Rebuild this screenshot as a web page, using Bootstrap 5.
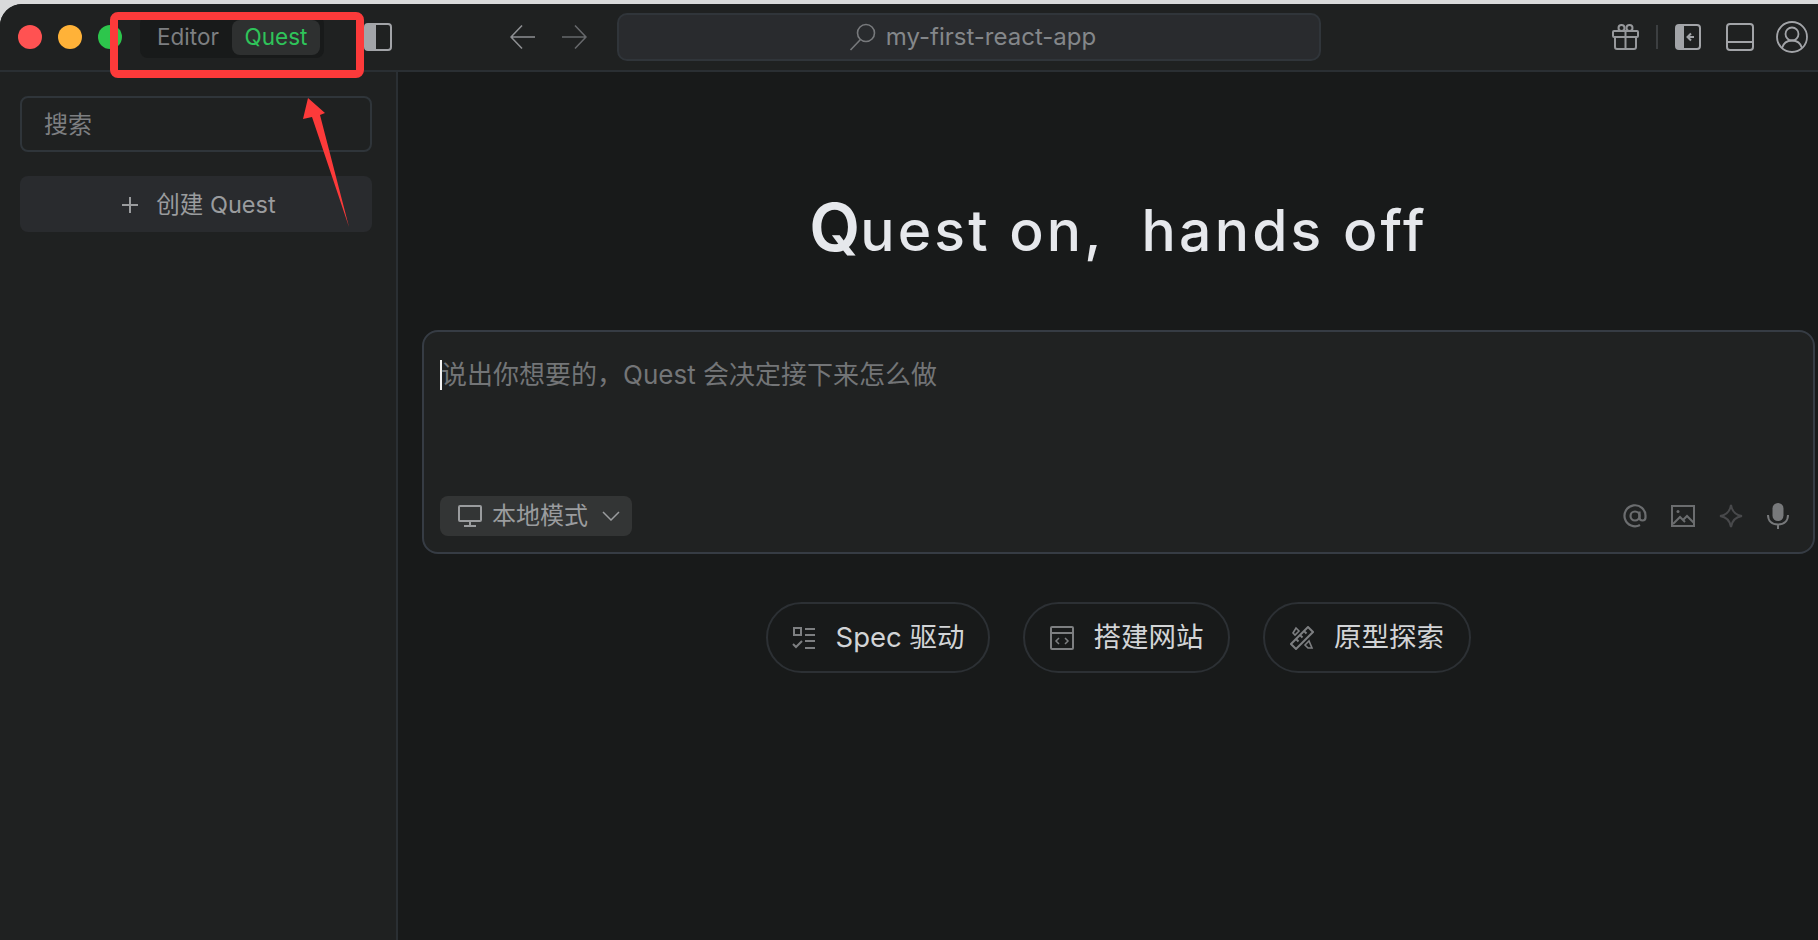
<!DOCTYPE html>
<html lang="zh-CN">
<head>
  <meta charset="UTF-8" />
  <title>my-first-react-app</title>
  <link href="https://cdn.jsdelivr.net/npm/bootstrap@5.3.3/dist/css/bootstrap.min.css" rel="stylesheet" />
  <style>
    html, body { height: 100%; }
    body {
      margin: 0;
      overflow: hidden;
      background: #d9dadb;
      font-family: Inter, "Noto Sans CJK SC", sans-serif;
      padding-top: 4px;
    }
    .app-window {
      height: 936px;
      background: #181a1a;
      border-top-left-radius: 22px;
      overflow: hidden;
      display: flex;
      flex-direction: column;
    }
    .title-bar {
      height: 68px;
      flex: none;
      background: #1f2121;
      border-bottom: 2px solid #2a2f33;
      padding-left: 18px;
    }
    .traffic-dot { width: 24px; height: 24px; border-radius: 50%; flex: none; margin-right: 16px; }
    .mode-switch {
      width: 184px;
      height: 42px;
      margin-left: 2px;
      background: #181a1a;
      border-radius: 8px;
      padding: 3px 4px 3px 17px;
      font-size: 22.500px;
      color: #7d7f81;
    }
    .mode-active {
      width: 88px;
      height: 35px;
      background: #2e3030;
      border-radius: 8px;
      color: #2fc45a;
    }
    .panel-toggle { margin-left: 40px; }
    .nav-back { margin-left: 118px; }
    .nav-forward { margin-left: 25px; }
    .address-bar {
      width: 704px;
      height: 48px;
      margin-left: 30px;
      padding-left: 7px;
      background: #292b2e;
      border: 2px solid #30353a;
      border-radius: 10px;
      color: #84878a;
      font-size: 24px;
      gap: 10px;
    }
    .bar-divider { width: 2px; height: 24px; background: #3c3f41; margin: 0 17px; }
    .panel-bottom { margin-left: 25px; }
    .user-avatar { margin: 0 10px 0 22px; }
    .side-col {
      width: 398px;
      flex: none;
      background: #1f2121;
      border-right: 2px solid #2a2f33;
      padding: 24px 24px 0 20px;
    }
    .side-search {
      height: 56px;
      border: 2px solid #2f353a;
      border-radius: 8px;
      padding: 2px 0 0 22px;
      color: #7d7f81;
      font-size: 24px;
    }
    .side-create {
      height: 56px;
      margin-top: 24px;
      padding: 2px 0 0 6px;
      background: #292b2e;
      border-radius: 8px;
      color: #9a9c9e;
      font-size: 23.500px;
      gap: 18px;
    }
    .main-col { padding: 0 3px 0 24px; min-width: 0; }
    .hero-title {
      margin: 122px 0 0;
      height: 74px;
      color: #e6e8ec;
      font-family: Inter, sans-serif;
      font-size: 57px;
      font-weight: 500;
      letter-spacing: 3.200px;
      line-height: 74px;
      text-align: center;
    }
    .hero-title b { font-size: 66px; font-weight: 600; line-height: 1; letter-spacing: 0; }
    .prompt-box {
      height: 224px;
      margin-top: 62px;
      background: #202222;
      border: 2px solid #363c44;
      border-radius: 16px;
      padding: 26px 16px 16px 16px;
    }
    .prompt-text { color: #737577; font-size: 26px; line-height: 34px; }
    .prompt-caret { display: inline-block; width: 2px; height: 30px; background: #f2f2f2; vertical-align: -6px; margin-right: -1px; }
    .local-mode {
      width: 192px;
      height: 40px;
      background: #333535;
      border-radius: 8px;
      color: #9a9c9e;
      font-size: 24px;
      padding-left: 18px;
      gap: 10px;
    }
    .prompt-tools { gap: 24px; margin-right: 8px; }
    .pill-row { margin-top: 48px; gap: 33px; }
    .pill-link {
      height: 71px;
      border: 2px solid #2c3034;
      border-radius: 36px;
      color: #d2d4d6;
      font-size: 27.500px;
      gap: 20px;
    }
    .pill-spec { width: 224px; }
    .pill-site { width: 207px; }
    .pill-proto { width: 208px; }
    .note-layer { position: absolute; left: 0; top: 0; pointer-events: none; }
    svg { display: block; flex: none; }
  </style>
</head>
<body>
  <div class="app-window">
    <!-- Title bar -->
    <div class="title-bar d-flex align-items-center">
      <span class="traffic-dot" style="background:#ff5252"></span>
      <span class="traffic-dot" style="background:#ffb238"></span>
      <span class="traffic-dot" style="background:#2dc64c"></span>
      <div class="mode-switch d-flex align-items-center justify-content-between">
        <span>Editor</span>
        <span class="mode-active d-flex align-items-center justify-content-center">Quest</span>
      </div>
      <svg class="panel-toggle" width="28" height="28" viewBox="0 0 28 28" fill="none">
        <rect x="1" y="1" width="26" height="26" rx="3" stroke="#a2a4a8" stroke-width="2"/>
        <path d="M3 1h9v26H3a2 2 0 0 1-2-2V3a2 2 0 0 1 2-2z" fill="#a2a4a8"/>
      </svg>
      <svg class="nav-back" width="26" height="26" viewBox="0 0 26 26" fill="none" stroke="#8d8f92" stroke-width="1.600">
        <path d="M25 13H1M12 1.500 1 13l11 11.500"/>
      </svg>
      <svg class="nav-forward" width="26" height="26" viewBox="0 0 26 26" fill="none" stroke="#66686b" stroke-width="1.600">
        <path d="M1 13h24M14 1.500 25 13 14 24.500"/>
      </svg>
      <div class="address-bar d-flex align-items-center justify-content-center">
        <svg width="27" height="28" viewBox="0 0 27 28" fill="none" stroke="#77797c" stroke-width="1.600">
          <circle cx="17" cy="10" r="8.500"/>
          <path d="M11.500 16.500 1.500 27"/>
        </svg>
        <span>my-first-react-app</span>
      </div>
      <div class="d-flex align-items-center ms-auto">
        <svg width="27" height="26" viewBox="0 0 27 26" fill="none" stroke="#96989b" stroke-width="2">
          <rect x="1" y="7" width="25" height="6" rx="1"/>
          <path d="M3 13v10a2 2 0 0 0 2 2h17a2 2 0 0 0 2-2V13M13.500 7v18"/>
          <circle cx="9.500" cy="4" r="3"/>
          <circle cx="17.500" cy="4" r="3"/>
        </svg>
        <span class="bar-divider"></span>
        <svg width="26" height="26" viewBox="0 0 26 26" fill="none">
          <rect x="1" y="1" width="24" height="24" rx="3" stroke="#a2a4a8" stroke-width="2"/>
          <path d="M3 1h6v24H3a2 2 0 0 1-2-2V3a2 2 0 0 1 2-2z" fill="#a2a4a8"/>
          <path d="M19 13h-6M16 9.500 12.500 13l3.500 3.500" stroke="#a2a4a8" stroke-width="2"/>
        </svg>
        <svg class="panel-bottom" width="28" height="28" viewBox="0 0 28 28" fill="none" stroke="#a2a4a8" stroke-width="2">
          <rect x="1" y="1" width="26" height="26" rx="3"/>
          <path d="M1 19h26"/>
        </svg>
        <svg class="user-avatar" width="32" height="32" viewBox="0 0 32 32" fill="none" stroke="#a2a4a8" stroke-width="1.800">
          <circle cx="16" cy="16" r="15"/>
          <circle cx="16" cy="13" r="6.500"/>
          <path d="M6 27c1.500-5 5-7.500 10-7.500S24.500 22 26 27"/>
        </svg>
      </div>
    </div>

    <div class="d-flex flex-grow-1">
      <!-- Sidebar -->
      <aside class="side-col">
        <div class="side-search d-flex align-items-center">搜索</div>
        <div class="side-create d-flex align-items-center justify-content-center">
          <svg width="16" height="16" viewBox="0 0 16 16" stroke="#9a9c9e" stroke-width="2"><path d="M8 0v16M0 8h16"/></svg>
          <span>创建 Quest</span>
        </div>
      </aside>

      <!-- Main -->
      <main class="main-col flex-grow-1">
        <h1 class="hero-title"><b>Q</b>uest on,&nbsp; hands off</h1>

        <div class="prompt-box d-flex flex-column justify-content-between">
          <div class="prompt-text"><span class="prompt-caret"></span>说出你想要的，Quest 会决定接下来怎么做</div>
          <div class="d-flex align-items-center justify-content-between">
            <div class="local-mode d-flex align-items-center">
              <svg width="24" height="22" viewBox="0 0 24 22" fill="none" stroke="#9a9c9e" stroke-width="2">
                <rect x="1" y="1" width="22" height="15" rx="1"/>
                <path d="M12 16v5M6 21h12"/>
              </svg>
              <span>本地模式</span>
              <svg class="ms-1" width="18" height="10" viewBox="0 0 18 10" fill="none" stroke="#9a9c9e" stroke-width="1.500"><path d="m1 1 8 8 8-8"/></svg>
            </div>
            <div class="prompt-tools d-flex align-items-center">
              <svg width="24" height="24" viewBox="0 0 24 24" fill="none" stroke="#6b6d6f" stroke-width="2.200">
                <circle cx="12" cy="12" r="4.500"/>
                <path d="M16.500 7.500v6a3 3 0 0 0 6 0V12A10.500 10.500 0 1 0 17 21"/>
              </svg>
              <svg width="24" height="22" viewBox="0 0 24 22" fill="none" stroke="#6b6d6f" stroke-width="2">
                <rect x="1" y="1" width="22" height="20"/>
                <path d="m2 19 7-7 5 5M12 15l4-4 7 7"/>
                <circle cx="7" cy="6.500" r="1.500" fill="#6b6d6f" stroke="none"/>
              </svg>
              <svg width="24" height="24" viewBox="0 0 24 24" fill="none" stroke="#48494b" stroke-width="2">
                <path d="M12 1c1 6.500 4.500 10 11 11-6.500 1-10 4.500-11 11-1-6.500-4.500-10-11-11 6.500-1 10-4.500 11-11z"/>
              </svg>
              <svg width="22" height="26" viewBox="0 0 22 26" fill="none">
                <rect x="5.500" y="0" width="11" height="18" rx="5.500" fill="#77797b"/>
                <path d="M1 12c0 6 4 9.500 10 9.500S21 18 21 12M11 21v5" stroke="#77797b" stroke-width="2"/>
              </svg>
            </div>
          </div>
        </div>

        <div class="pill-row d-flex justify-content-center">
          <div class="pill-link pill-spec d-flex align-items-center justify-content-center">
            <svg width="24" height="24" viewBox="0 0 24 24" fill="none" stroke="#7d7f81" stroke-width="2">
              <rect x="2" y="2" width="7" height="7"/>
              <path d="M13 3h10M13 9h10M13 15h10M13 22h10M1 18l3 3 6-6"/>
            </svg>
            <span>Spec 驱动</span>
          </div>
          <div class="pill-link pill-site d-flex align-items-center justify-content-center">
            <svg width="24" height="24" viewBox="0 0 24 24" fill="none" stroke="#7d7f81" stroke-width="2">
              <rect x="1" y="1" width="22" height="22" rx="1"/>
              <path d="M1 7h22"/>
              <path d="m9 12-3 3 3 3M15 12l3 3-3 3" stroke-width="1.500"/>
            </svg>
            <span>搭建网站</span>
          </div>
          <div class="pill-link pill-proto d-flex align-items-center justify-content-center">
            <svg width="24" height="24" viewBox="0 0 24 24" fill="none" stroke="#7d7f81" stroke-width="2">
              <path d="m18 1 5 5L6 23l-5-5zM14 5l2.500 2.500M10 9l2.500 2.500M6 13l2.500 2.500"/>
              <path d="M3 7 6 2l3 3-4 4zM15 19l4-4 3 7-4 0z" stroke-width="1.600"/>
            </svg>
            <span>原型探索</span>
          </div>
        </div>
      </main>
    </div>
  </div>

  <!-- Red annotation drawn over the screenshot -->
  <svg class="note-layer" width="1818" height="940" viewBox="0 0 1818 940" fill="none">
    <rect x="114" y="16" width="246" height="58" rx="4" stroke="#fc3a3a" stroke-width="8"/>
    <path d="M308 98 303 119 312 117 349 227 320 115 325 113z" fill="#fc3a3a"/>
  </svg>
</body>
</html>
